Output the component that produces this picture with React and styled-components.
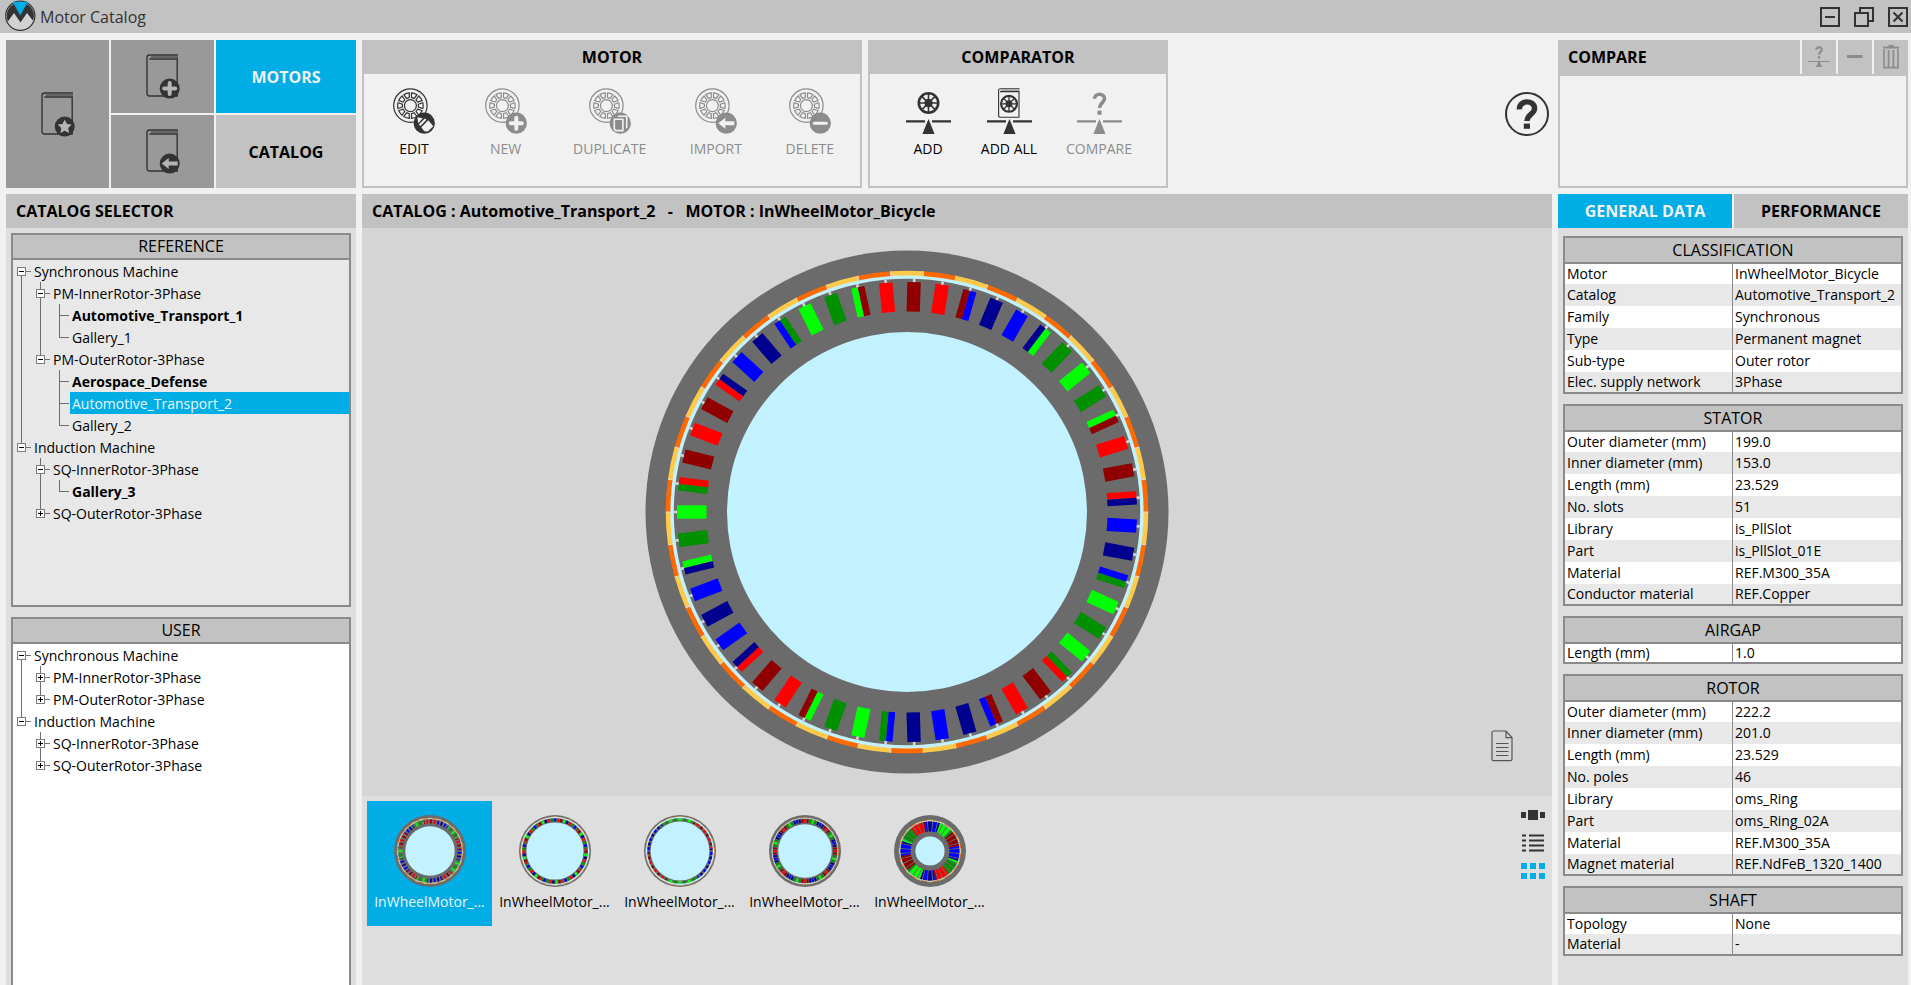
import React, { useState } from "react";
import styled, { createGlobalStyle } from "styled-components";

const c = {
  page: "#f1f1f1",
  bar: "#c2c2c2",
  dark: "#999999",
  accent: "#00ade5",
  panel: "#dedede",
  stage: "#d5d5d5",
  line: "#8a8a8a",
  row: "#e8e8e8",
  ink: "#333333",
  off: "#8c8c8c",
};

const GlobalStyle = createGlobalStyle`
  *, *::before, *::after { box-sizing: border-box; }
  body { margin: 0; background: ${c.page}; color: #000; font: 14px/20px "Open Sans", "Noto Sans", sans-serif; }
  h1, h2, h3 { margin: 0; font-weight: 400; font-size: 16px; }
  ul { margin: 0; padding: 0; }
  button { margin: 0; padding: 0; border: 0; background: none; color: inherit; font: inherit; cursor: pointer; }
  button:disabled { cursor: default; }
  svg { display: block; }
`;

/* ---------- frame ---------- */
const Window = styled.div`
  height: 100vh;
  display: flex;
  flex-direction: column;
  overflow: hidden;
`;
const TitleBar = styled.header`
  height: 33px;
  flex: none;
  display: flex;
  align-items: center;
  gap: 4px;
  padding: 0 3px 0 4px;
  background: ${c.bar};
`;
const Title = styled.h1`
  flex: 1;
  color: ${c.ink};
`;
const WindowButtons = styled.div`
  display: flex;
  gap: 14px;
`;
const Main = styled.main`
  flex: 1;
  min-height: 0;
  display: grid;
  grid-template-columns: 350px minmax(0, 1fr) 350px;
  grid-template-rows: 148px minmax(0, 1fr);
  gap: 6px;
  padding: 7px 3px 0 6px;
`;
const Column = styled.section`
  display: flex;
  flex-direction: column;
  min-height: 0;
  background: ${c.panel};
`;
const Heading = styled.h2`
  height: 34px;
  flex: none;
  padding: 0 10px;
  line-height: 34px;
  font-weight: 700;
  text-align: ${(p) => (p.$center ? "center" : "left")};
  background: ${c.bar};
  white-space: pre;
`;

/* ---------- top left ---------- */
const ModeGrid = styled.nav`
  display: grid;
  grid-template-columns: 103px 103px 1fr;
  grid-template-rows: 1fr 1fr;
  gap: 2px;
`;
const ModeTile = styled.button`
  display: grid;
  place-items: center;
  grid-row: ${(p) => (p.$tall ? "span 2" : "auto")};
  background: ${(p) => (p.$active ? c.accent : p.$dark ? c.dark : c.bar)};
  color: ${(p) => (p.$active ? "#f1f1f1" : "#000")};
  font-size: 16px;
  font-weight: 700;
`;

/* ---------- ribbon ---------- */
const Ribbon = styled.div`
  display: flex;
  gap: 6px;
`;
const Group = styled.section`
  width: ${(p) => p.$width}px;
  display: flex;
  flex-direction: column;
  border: 2px solid ${c.bar};
  border-top: 0;
`;
const GroupBody = styled.div`
  display: flex;
  justify-content: space-between;
  align-items: flex-start;
  padding: 14px ${(p) => p.$inset}px 0;
`;
const Tool = styled.button`
  min-width: 48px;
  display: flex;
  flex-direction: column;
  align-items: center;
  gap: 5px;
  color: ${(p) => (p.disabled ? c.off : "#000")};
`;
const HelpButton = styled.button`
  width: 50px;
  margin-left: auto;
  display: grid;
  place-items: center;
`;

/* ---------- compare ---------- */
const ComparePanel = styled.section`
  border: 2px solid ${c.bar};
  border-top: 0;
`;
const CompareBar = styled.div`
  display: flex;
  gap: 2px;
  height: 36px;
  margin: 0 -2px;
  padding-bottom: 2px;
  background: linear-gradient(${c.bar}, ${c.bar}) bottom / 100% 2px no-repeat;
`;
const CompareTitle = styled(Heading)`
  flex: 1;
`;
const CompareButton = styled.button`
  width: 34px;
  height: 34px;
  display: grid;
  place-items: center;
  background: ${c.bar};
`;

/* ---------- catalog trees ---------- */
const SelectorBody = styled.div`
  flex: 1;
  min-height: 0;
  display: flex;
  flex-direction: column;
  gap: 10px;
  padding: 5px 5px 0;
`;
const TreeBox = styled.section`
  flex: ${(p) => (p.$fill ? "1" : "0 0 374px")};
  border: 2px solid ${c.line};
  border-bottom-width: ${(p) => (p.$fill ? 0 : 2)}px;
  background: ${(p) => (p.$fill ? "#fff" : c.row)};
`;
const BoxTitle = styled.h3`
  height: ${(p) => p.$height}px;
  border-bottom: 2px solid ${c.line};
  background: ${c.bar};
  line-height: ${(p) => p.$height - 2}px;
  text-align: center;
`;
const TreeList = styled.ul`
  list-style: none;
`;
const TreeRow = styled.li`
  display: flex;
  height: 22px;
`;
const Guide = styled.span`
  flex: none;
  width: 19px;
  padding: 7px 0 0 4px;
  background-repeat: no-repeat;
  background-image: linear-gradient(#6f6f6f, #6f6f6f), linear-gradient(#6f6f6f, #6f6f6f), linear-gradient(#6f6f6f, #6f6f6f);
  background-position: 8px 0, 8px 11px, 8px 11px;
  background-size: 1px ${(p) => (p.$up ? 12 : 0)}px, 1px ${(p) => (p.$down ? 11 : 0)}px, ${(p) => (p.$across ? 10 : 0)}px 1px;
`;
const Toggle = styled.button`
  display: block;
  width: 9px;
  height: 9px;
  border: 1px solid #7c7c7c;
  background: #fff;
  background-repeat: no-repeat;
  background-image: linear-gradient(#000, #000), linear-gradient(#000, #000);
  background-position: center;
  background-size: 5px 1px, 1px ${(p) => (p.$open ? 0 : 5)}px;
`;
const TreeLabel = styled.button`
  padding-left: 2px;
  line-height: 21px;
  text-align: left;
  flex: ${(p) => (p.$selected ? "1" : "none")};
  font-weight: ${(p) => (p.$bold ? 700 : 400)};
  background: ${(p) => (p.$selected ? c.accent : "none")};
  color: ${(p) => (p.$selected ? "#e8f6fb" : "#000")};
`;

/* ---------- stage ---------- */
const Stage = styled.div`
  flex: 1;
  min-height: 0;
  display: flex;
  background: ${c.stage};
`;
const Drawing = styled.div`
  flex: 1;
  min-width: 0;
  padding: 22px 0;
  svg { width: 100%; height: 100%; }
`;
const StageSide = styled.div`
  width: 100px;
  display: flex;
  justify-content: center;
  align-items: flex-end;
  padding-bottom: 34px;
`;
const Strip = styled.div`
  height: 189px;
  flex: none;
  display: flex;
  justify-content: space-between;
  align-items: flex-start;
  padding: 5px 6px 0 5px;
`;
const Thumbs = styled.div`
  display: flex;
`;
const Thumb = styled.button`
  width: 125px;
  height: 125px;
  display: flex;
  flex-direction: column;
  align-items: center;
  gap: 5px;
  padding-top: 14px;
  background: ${(p) => (p.$active ? c.accent : "none")};
  color: ${(p) => (p.$active ? "#e8f6fb" : "#000")};
  svg { width: 72px; height: 72px; }
`;
const ViewModes = styled.div`
  display: flex;
  flex-direction: column;
`;
const ViewButton = styled.button`
  width: 26px;
  height: 28px;
  display: grid;
  place-items: center;
  color: ${(p) => (p.$active ? c.accent : c.ink)};
`;

/* ---------- data ---------- */
const Tabs = styled.div`
  display: grid;
  grid-template-columns: 1fr 1fr;
  gap: 2px;
  background: ${c.page};
`;
const Tab = styled.button`
  height: 34px;
  font-size: 16px;
  font-weight: 700;
  background: ${(p) => (p.$active ? c.accent : c.bar)};
  color: ${(p) => (p.$active ? "#f1f1f1" : "#000")};
`;
const Cards = styled.div`
  display: flex;
  flex-direction: column;
  gap: 10px;
  padding: 8px 5px 0;
`;
const Card = styled.section`
  border: 2px solid ${c.line};
`;
const DataTable = styled.table`
  width: 100%;
  table-layout: fixed;
  border-collapse: separate;
  border-spacing: 0;
  background: #fff;
  tr:nth-child(even) { background: ${c.row}; }
`;
const LabelCell = styled.th`
  width: 168px;
  height: ${(p) => p.$height}px;
  padding: 0 2px;
  border-right: 1px solid ${c.line};
  font-weight: 400;
  line-height: 18px;
  text-align: left;
  white-space: nowrap;
`;
const ValueCell = styled.td`
  padding: 0 2px;
  line-height: 18px;
  white-space: nowrap;
`;

/* ---------- motor cross-sections ---------- */
const PAINT = { R: "#ff0000", r: "#900000", G: "#00ff00", g: "#009000", B: "#0000ff", b: "#000090" };

const polar = (r, deg) => {
  const a = (deg * Math.PI) / 180;
  return [r * Math.sin(a), -r * Math.cos(a)];
};
const sector = (r0, r1, a0, a1) => {
  const p = (r, a) => polar(r, a).map((v) => v.toFixed(3)).join(" ");
  return `M${p(r1, a0)}A${r1} ${r1} 0 0 1 ${p(r1, a1)}L${p(r0, a1)}A${r0} ${r0} 0 0 0 ${p(r0, a0)}Z`;
};

const BICYCLE = {
  size: 261.5, magnet: 241.3, gap: 236.6, stator: 233.2, slotTop: 230, slotEnd: 200.5, bore: 180,
  wTop: 13.4, wEnd: 13.4, poles: 46, start: -90, opening: 2.6,
  slots: "G gR r R r Rb B b Bg G g Gr R r R rB b B bG g G g Gr R r Rb B b Bg G g G gR r R rB b B b Bg G g Gr R r Rb B b B bG g",
};
const THIN = {
  size: 36, magnet: 34.6, gap: 34.2, stator: 33, slotTop: 32.6, slotEnd: 29.4, bore: 28.6,
  wTop: 2.4, wEnd: 2.2, poles: 56, start: 0, opening: 0.4,
  slots: Array(9).fill("B gR r G b R g").join(" "),
};
const SPARSE = {
  size: 36, magnet: 34.6, gap: 34.2, stator: 32.8, slotTop: 32.6, slotEnd: 30.2, bore: 29.4,
  wTop: 3, wEnd: 2.8, poles: 40, start: 0, opening: 0.4,
  slots: Array(2).fill("G g G gr R r R r R r Rb B b B b B b Bg g G g").join(" "),
};
const DENSE = {
  size: 36, magnet: 33.6, gap: 33.2, stator: 32.6, slotTop: 32, slotEnd: 28.2, bore: 26.8,
  wTop: 2, wEnd: 1.8, poles: 64, start: 0, opening: 0.3,
  slots: Array(8).fill("R r g G g b B b r").join(" "),
};
const WIDE = {
  size: 36, magnet: 31.2, gap: 30.4, stator: 29.8, slotTop: 29.4, slotEnd: 19.4, bore: 14.6,
  wTop: 4.2, wEnd: 2.6, poles: 32, start: 0, opening: 0.4,
  slots: Array(2).fill("b B bG G G gr r r rB B B bG g g gR R R rB").join(" ").replace(/^/, ""),
};

function MotorSection({ spec, label }) {
  const slots = spec.slots.split(" ");
  const step = 360 / slots.length;
  const pole = 360 / spec.poles;
  const s = spec.size > 100 ? spec.size + 0.5 : spec.size;
  return (
    <svg viewBox={`${-s} ${-s} ${2 * s} ${2 * s}`} role="img" aria-label={label}>
      <circle r={spec.size} fill="#6b6b6b" />
      {Array.from({ length: spec.poles }, (_, i) => (
        <path
          key={i}
          d={sector(spec.gap - spec.size / 500, spec.magnet, (i - 0.5) * pole, (i + 0.5) * pole)}
          fill={i % 2 ? "#ff6a00" : "#ffca4a"}
        />
      ))}
      {Array.from({ length: spec.poles }, (_, i) => (
        <path
          key={i}
          transform={`rotate(${(i + 0.5) * pole})`}
          d={`M0 ${-spec.magnet}V${-spec.gap}`}
          stroke="#dcdcdc"
          strokeWidth={spec.size / 260}
        />
      ))}
      <circle r={spec.gap} fill="#c2f2ff" />
      <circle r={spec.stator} fill="#6b6b6b" />
      {slots.map((code, i) => {
        const { wTop, wEnd, slotTop, slotEnd, opening, stator } = spec;
        const t = wTop / 2;
        const e = wEnd / 2;
        return (
          <g key={i} transform={`rotate(${spec.start + i * step})`}>
            <rect x={-opening / 2} y={-stator} width={opening} height={stator - slotTop + 1} fill="#d5d5d5" />
            {code.length === 1 ? (
              <path d={`M${-t} ${-slotTop}H${t}L${e} ${-slotEnd}H${-e}Z`} fill={PAINT[code]} />
            ) : (
              <>
                <path d={`M${-t} ${-slotTop}H0V${-slotEnd}H${-e}Z`} fill={PAINT[code[0]]} />
                <path d={`M0 ${-slotTop}H${t}L${e} ${-slotEnd}H0Z`} fill={PAINT[code[1]]} />
              </>
            )}
          </g>
        );
      })}
      <circle r={spec.bore} fill="#c2f2ff" />
    </svg>
  );
}

/* ---------- icons ---------- */
const Mark = ({ kind, bg }) => {
  const line = { stroke: bg, strokeWidth: 4, strokeLinecap: "round", fill: "none" };
  if (kind === "plus") return <path d="M-5.5 0H5.5M0 -5.5V5.5" {...line} />;
  if (kind === "minus") return <path d="M-6 0H6" {...line} strokeWidth="3" />;
  if (kind === "arrow") return <path d="M-8 0L-1 -5.5V-2H8V2H-1V5.5Z" fill={bg} />;
  if (kind === "star")
    return <path d="M0 -7L2.2 -2.6L7 -2L3.5 1.5L4.3 6.4L0 4.1L-4.3 6.4L-3.5 1.5L-7 -2L-2.2 -2.6Z" fill={bg} />;
  if (kind === "copy")
    return (
      <g fill="none" stroke={bg} strokeWidth="1.6">
        <path d="M-2.5 -7H6.4V5" />
        <path d="M-6 -4H2.6V7.4H-4.4L-6 5.8Z" />
      </g>
    );
  return (
    <g fill={bg}>
      <path d="M-7 -6L-1.5 -5L-6 0Z" />
      <path d="M-5.5 1.2L0.6 -4.8L2.2 -3.4L-4 2.8Z" />
      <path d="M-3 4L4 -3L9 3L3.6 8.4L0 8Z" />
    </g>
  );
};

const BookIcon = ({ kind }) => (
  <svg width="34" height="45" viewBox="0 0 34 45" aria-hidden="true">
    <g fill="none" stroke={c.ink} strokeWidth="1.4">
      <path d="M32 1H3.4A2.4 2.4 0 0 0 1 3.2V39.6A2.4 2.4 0 0 0 3.4 42H31.2V5H3.4" />
      <path d="M5 3H32" strokeWidth="1" />
    </g>
    <circle cx="23.7" cy="34.6" r="10" fill={c.ink} />
    <g transform="translate(23.7 34.6)">
      <Mark kind={kind} bg="#b5b5b5" />
    </g>
  </svg>
);

/* Stator slot: a wide pocket that narrows to a short neck at the bore */
const MotorIcon = ({ kind, color }) => (
  <svg width="42" height="46" viewBox="0 0 42 46" aria-hidden="true">
    <g transform="translate(17.4 17.6)" fill="none" stroke={color} strokeWidth="1.2">
      <circle r="16.7" />
      <circle r="6" />
      {Array.from({ length: 10 }, (_, i) => (
        <path key={i} transform={`rotate(${18 + i * 36})`} d="M-1.4 -8L-2.9 -12.4A12.8 12.8 0 0 1 2.9 -12.4L1.4 -8Z" />
      ))}
    </g>
    <circle cx="31.3" cy="35.2" r="10.6" fill={color} />
    <g transform="translate(31.3 35.2)">
      <Mark kind={kind} bg={c.page} />
    </g>
  </svg>
);

const Wheel = ({ x, y, r }) => (
  <g transform={`translate(${x} ${y}) scale(${r / 11})`} stroke={c.ink} fill="none">
    <circle r="9.7" strokeWidth="2.6" />
    <circle r="4.2" fill={c.ink} stroke="none" />
    {[0, 45, 90, 135].map((a) => (
      <path key={a} transform={`rotate(${a})`} d="M0 -9V-3M0 3V9" strokeWidth="1.6" />
    ))}
  </g>
);

const Query = ({ x, y, scale, color }) => (
  <g transform={`translate(${x} ${y}) scale(${scale})`}>
    <path d="M-5 -5.2C-5 -11.3 5 -11.3 5 -5.2C5 -1.4 0 -1.2 0 4" fill="none" stroke={color} strokeWidth="3.6" />
    <rect x="-2" y="6.6" width="4" height="4.2" fill={color} />
  </g>
);

const BalanceIcon = ({ kind, color }) => (
  <svg width="45" height="46" viewBox="0 0 45 46" aria-hidden="true">
    <path d="M0 33.4H19M26 33.4H45" stroke={color} strokeWidth="2.4" />
    <path d="M22.5 31L28.6 46H16.4Z" fill={color} />
    {kind === "wheel" && <Wheel x={22.5} y={15} r={11} />}
    {kind === "book" && (
      <>
        <g fill="none" stroke={color} strokeWidth="1.1">
          <path d="M32.5 0.8H13A1.6 1.6 0 0 0 11.6 2.4V27.6A1.6 1.6 0 0 0 13 29.2H32V3.6H13" />
          <path d="M14 2.2H32.5" stroke={c.off} />
        </g>
        <Wheel x={22} y={15.8} r={9} />
      </>
    )}
    {kind === "query" && <Query x={22.5} y={16} scale={1} color={color} />}
  </svg>
);

const LogoIcon = () => (
  <svg width="32" height="33" viewBox="0 0 32 33" aria-hidden="true">
    <defs>
      <clipPath id="logo-disc">
        <circle cx="16.3" cy="15.8" r="13.6" />
      </clipPath>
    </defs>
    <circle cx="16.3" cy="15.8" r="14.6" fill="#d2d2d2" stroke={c.ink} strokeWidth="1.2" />
    <path clipPath="url(#logo-disc)" fill={c.ink} d="M0 0H33V22H30L23 13L16.5 22.5L10 13L3.5 22H0Z" />
    <path d="M8.6 1.8H24L16.3 15.4Z" fill={c.accent} />
  </svg>
);

const WinIcon = ({ kind }) => (
  <svg width="20" height="20" viewBox="0 0 20 20" fill="none" stroke={c.ink} strokeWidth="2" aria-hidden="true">
    {kind === "restore" ? (
      <path d="M1 6H14V19H1ZM6 6V1H19V14H14" />
    ) : (
      <>
        <rect x="1" y="1" width="18" height="18" />
        <path d={kind === "close" ? "M5.5 5.5L14.5 14.5M14.5 5.5L5.5 14.5" : "M5 10H15"} />
      </>
    )}
  </svg>
);

const HelpIcon = () => (
  <svg width="46" height="46" viewBox="-23 -23 46 46" aria-hidden="true">
    <circle r="21" fill="none" stroke={c.ink} strokeWidth="2" />
    <path d="M-7.6 -4.6C-8 -14.4 7.6 -14.4 7.6 -5.6C7.6 0 0 0.4 0 7" fill="none" stroke={c.ink} strokeWidth="5.4" />
    <rect x="-3.2" y="9.6" width="6.2" height="5.2" fill={c.ink} />
  </svg>
);

const SmallBalance = () => (
  <svg width="22" height="22" viewBox="0 0 22 22" aria-hidden="true">
    <path d="M0.5 15.5H21.5" stroke={c.off} strokeWidth="1" />
    <path d="M11 14L14 21H8Z" fill={c.off} />
    <Query x={11} y={6.6} scale={0.55} color={c.off} />
  </svg>
);
const MinusIcon = () => (
  <svg width="16" height="6" viewBox="0 0 16 6" aria-hidden="true">
    <path d="M0 2.5H15.5" stroke={c.off} strokeWidth="3" />
  </svg>
);
const TrashIcon = () => (
  <svg width="18" height="24" viewBox="0 0 18 24" fill="none" stroke={c.off} aria-hidden="true">
    <path d="M1 2.5H17M6.5 1H11.5" strokeWidth="2" />
    <path d="M2 4V22.6H16V4" strokeWidth="1.6" />
    <path d="M6.6 5V22M11.4 5V22" strokeWidth="1.8" />
  </svg>
);
const DocIcon = () => (
  <svg width="22" height="32" viewBox="0 0 22 32" fill="none" stroke="#555" strokeWidth="1.2" aria-hidden="true">
    <path d="M15 1H2.6A1.8 1.8 0 0 0 1 2.8V29A1.6 1.6 0 0 0 2.6 30.6H19.4A1.6 1.6 0 0 0 21 29V7.6ZM15 1V7.6H21" />
    <path d="M5 13.5H17.5M5 17.5H17.5M5 21.5H17.5M5 25.5H17.5" />
  </svg>
);
const ViewIcon = ({ kind }) => (
  <svg width="24" height="18" viewBox="0 0 24 18" fill="currentColor" aria-hidden="true">
    {kind === "carousel" && <path d="M0 6H5V12H0ZM7 4H17V14H7ZM19 6H24V12H19Z" />}
    {kind === "list" &&
      [0, 5, 10, 15].map((y) => <path key={y} d={`M1 ${y + 0.5}H5V${y + 2.5}H1ZM8 ${y + 0.5}H23V${y + 2.5}H8Z`} />)}
    {kind === "grid" &&
      [1, 11].map((y) => <path key={y} d={`M0 ${y}H6V${y + 6}H0ZM9 ${y}H15V${y + 6}H9ZM18 ${y}H24V${y + 6}H18Z`} />)}
  </svg>
);

/* ---------- content ---------- */
/* Guide codes, one for each level: blank, v = through line, and for the row's own cell
   first/mid/last togglers (f, m, e) or leaf joints (t, l). */
const REFERENCE = [
  ["Synchronous Machine", "f", "open"],
  ["PM-InnerRotor-3Phase", "vm", "open"],
  ["Automotive_Transport_1", "vvt", null, true],
  ["Gallery_1", "vvl"],
  ["PM-OuterRotor-3Phase", "ve", "open"],
  ["Aerospace_Defense", "v t", null, true],
  ["Automotive_Transport_2", "v t"],
  ["Gallery_2", "v l"],
  ["Induction Machine", "e", "open"],
  ["SQ-InnerRotor-3Phase", " m", "open"],
  ["Gallery_3", " vl", null, true],
  ["SQ-OuterRotor-3Phase", " e", "closed"],
];
const USER = [
  ["Synchronous Machine", "f", "open"],
  ["PM-InnerRotor-3Phase", "vm", "closed"],
  ["PM-OuterRotor-3Phase", "ve", "closed"],
  ["Induction Machine", "e", "open"],
  ["SQ-InnerRotor-3Phase", " m", "closed"],
  ["SQ-OuterRotor-3Phase", " e", "closed"],
];
const DATA = [
  ["CLASSIFICATION", [
    ["Motor", "InWheelMotor_Bicycle"], ["Catalog", "Automotive_Transport_2"], ["Family", "Synchronous"],
    ["Type", "Permanent magnet"], ["Sub-type", "Outer rotor"], ["Elec. supply network", "3Phase"],
  ]],
  ["STATOR", [
    ["Outer diameter (mm)", "199.0"], ["Inner diameter (mm)", "153.0"], ["Length (mm)", "23.529"], ["No. slots", "51"],
    ["Library", "is_PllSlot"], ["Part", "is_PllSlot_01E"], ["Material", "REF.M300_35A"], ["Conductor material", "REF.Copper"],
  ]],
  ["AIRGAP", [["Length (mm)", "1.0"]]],
  ["ROTOR", [
    ["Outer diameter (mm)", "222.2"], ["Inner diameter (mm)", "201.0"], ["Length (mm)", "23.529"], ["No. poles", "46"],
    ["Library", "oms_Ring"], ["Part", "oms_Ring_02A"], ["Material", "REF.M300_35A"], ["Magnet material", "REF.NdFeB_1320_1400"],
  ]],
  ["SHAFT", [["Topology", "None"], ["Material", "-"]]],
];
const MOTOR_TOOLS = [["EDIT", "edit"], ["NEW", "plus"], ["DUPLICATE", "copy"], ["IMPORT", "arrow"], ["DELETE", "minus"]];
const COMPARE_TOOLS = [["ADD", "wheel"], ["ADD ALL", "book"], ["COMPARE", "query"]];
const THUMBS = [BICYCLE, THIN, SPARSE, DENSE, WIDE];

function Tree({ rows, selected, onSelect }) {
  return (
    <TreeList>
      {rows.map(([name, guides, state, bold]) => (
        <TreeRow key={name}>
          {[...guides].map((g, level) => (
            <Guide key={level} $up={"vmetl".includes(g)} $down={"vfmt".includes(g)} $across={"fmetl".includes(g)}>
              {state && level === guides.length - 1 && (
                <Toggle $open={state === "open"} aria-label={`${state === "open" ? "Collapse" : "Expand"} ${name}`} />
              )}
            </Guide>
          ))}
          <TreeLabel $bold={bold} $selected={selected === name} onClick={() => onSelect(name)}>
            {name}
          </TreeLabel>
        </TreeRow>
      ))}
    </TreeList>
  );
}

function DataCard({ title, rows }) {
  const height = (i) => 22 - (i === 0 ? 2 : 0) - (i === rows.length - 1 ? 2 : 0);
  return (
    <Card>
      <BoxTitle $height={26}>{title}</BoxTitle>
      <DataTable aria-label={title}>
        <tbody>
          {rows.map(([label, value], i) => (
            <tr key={label}>
              <LabelCell scope="row" $height={height(i)}>{label}</LabelCell>
              <ValueCell>{value}</ValueCell>
            </tr>
          ))}
        </tbody>
      </DataTable>
    </Card>
  );
}

export default function App() {
  const [catalog, setCatalog] = useState("Automotive_Transport_2");
  const [motor, setMotor] = useState(0);
  const [view, setView] = useState("grid");
  const [tab, setTab] = useState("GENERAL DATA");
  return (
    <Window>
      <GlobalStyle />
      <TitleBar>
        <LogoIcon />
        <Title>Motor Catalog</Title>
        <WindowButtons>
          {["minimize", "restore", "close"].map((k) => (
            <button key={k} aria-label={k}><WinIcon kind={k} /></button>
          ))}
        </WindowButtons>
      </TitleBar>
      <Main>
        <ModeGrid>
          <ModeTile $dark $tall aria-label="Favorite catalog"><BookIcon kind="star" /></ModeTile>
          <ModeTile $dark aria-label="New catalog"><BookIcon kind="plus" /></ModeTile>
          <ModeTile $active>MOTORS</ModeTile>
          <ModeTile $dark aria-label="Import catalog"><BookIcon kind="arrow" /></ModeTile>
          <ModeTile>CATALOG</ModeTile>
        </ModeGrid>

        <Ribbon>
          <Group $width={500}>
            <Heading $center>MOTOR</Heading>
            <GroupBody $inset={26}>
              {MOTOR_TOOLS.map(([label, kind], i) => (
                <Tool key={label} disabled={i > 0}>
                  <MotorIcon kind={kind} color={i > 0 ? c.off : c.ink} />
                  {label}
                </Tool>
              ))}
            </GroupBody>
          </Group>
          <Group $width={300}>
            <Heading $center>COMPARATOR</Heading>
            <GroupBody $inset={34}>
              {COMPARE_TOOLS.map(([label, kind]) => (
                <Tool key={label} disabled={kind === "query"}>
                  <BalanceIcon kind={kind} color={kind === "query" ? c.off : c.ink} />
                  {label}
                </Tool>
              ))}
            </GroupBody>
          </Group>
          <HelpButton aria-label="Help"><HelpIcon /></HelpButton>
        </Ribbon>

        <ComparePanel>
          <CompareBar>
            <CompareTitle>COMPARE</CompareTitle>
            <CompareButton disabled aria-label="Compare motors"><SmallBalance /></CompareButton>
            <CompareButton disabled aria-label="Remove"><MinusIcon /></CompareButton>
            <CompareButton disabled aria-label="Remove all"><TrashIcon /></CompareButton>
          </CompareBar>
        </ComparePanel>

        <Column>
          <Heading>CATALOG SELECTOR</Heading>
          <SelectorBody>
            <TreeBox>
              <BoxTitle $height={25}>REFERENCE</BoxTitle>
              <Tree rows={REFERENCE} selected={catalog} onSelect={setCatalog} />
            </TreeBox>
            <TreeBox $fill>
              <BoxTitle $height={25}>USER</BoxTitle>
              <Tree rows={USER} selected={null} onSelect={setCatalog} />
            </TreeBox>
          </SelectorBody>
        </Column>

        <Column>
          <Heading>{`CATALOG : ${catalog}   -   MOTOR : InWheelMotor_Bicycle`}</Heading>
          <Stage>
            <Drawing><MotorSection spec={THUMBS[motor]} label="Motor cross-section" /></Drawing>
            <StageSide>
              <button aria-label="Documentation"><DocIcon /></button>
            </StageSide>
          </Stage>
          <Strip>
            <Thumbs>
              {THUMBS.map((spec, i) => (
                <Thumb key={i} $active={i === motor} onClick={() => setMotor(i)}>
                  <MotorSection spec={spec} label={`Motor ${i + 1}`} />
                  InWheelMotor_...
                </Thumb>
              ))}
            </Thumbs>
            <ViewModes>
              {["carousel", "list", "grid"].map((k) => (
                <ViewButton key={k} $active={k === view} aria-label={`${k} view`} onClick={() => setView(k)}>
                  <ViewIcon kind={k} />
                </ViewButton>
              ))}
            </ViewModes>
          </Strip>
        </Column>

        <Column>
          <Tabs>
            {["GENERAL DATA", "PERFORMANCE"].map((t) => (
              <Tab key={t} $active={t === tab} onClick={() => setTab(t)}>{t}</Tab>
            ))}
          </Tabs>
          <Cards>
            {DATA.map(([title, rows]) => <DataCard key={title} title={title} rows={rows} />)}
          </Cards>
        </Column>
      </Main>
    </Window>
  );
}
